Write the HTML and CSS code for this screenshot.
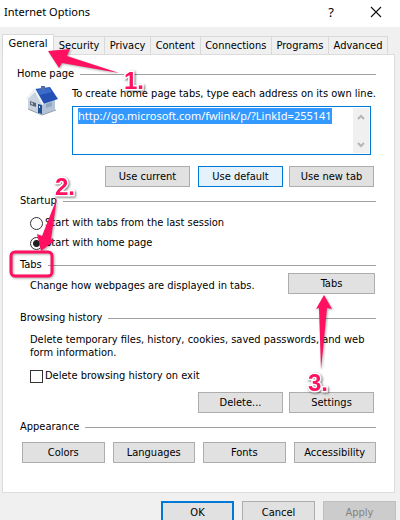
FILE: index.html
```html
<!DOCTYPE html>
<html lang="en">
<head>
<meta charset="utf-8">
<title>Internet Options</title>
<link rel="stylesheet" href="styles.css">
</head>
<body>
<div class="dialog">
  <header class="titlebar">
    <h1>Internet Options</h1>
    <button class="caption" type="button">?</button>
    <button class="caption" type="button" aria-label="Close">
      <svg width="12" height="12" viewBox="0 0 12 12"><path d="M1 1l10 10M11 1L1 11" stroke="#111" stroke-width="1.1" fill="none"/></svg>
    </button>
  </header>
  <nav class="tabs">
    <button type="button" class="tab active">General</button>
    <button type="button" class="tab">Security</button>
    <button type="button" class="tab">Privacy</button>
    <button type="button" class="tab">Content</button>
    <button type="button" class="tab">Connections</button>
    <button type="button" class="tab">Programs</button>
    <button type="button" class="tab">Advanced</button>
  </nav>
  <main class="panel">
    <section class="group home">
      <h2>Home page</h2>
      <div class="home-row">
        <svg class="house" width="34" height="30" viewBox="0 0 34 30">
          <path d="M2 12L10 4l7 13v12L2 23z" fill="#c9d4e0"/>
          <path d="M16 16l13-4v12l-13 5z" fill="#b3c4d8"/>
          <path d="M9 3L24 1l8 12-15 5z" fill="#2450b4"/>
          <path d="M11 4l12-2 3 4-12 3z" fill="#3b6bcb"/>
          <path d="M0 12L9 2l9 16-2 1L9 6 1 14z" fill="#eef3f8"/>
          <path d="M15 0h4v4l-4 1z" fill="#4d6fae"/>
          <path d="M4 15l6 2v4l-6-2z" fill="#596579"/>
          <path d="M5 16l2 1v2l-2-1z" fill="#b9bfc6"/>
          <path d="M12 18l4 1v9l-4-1z" fill="#234f8d"/>
          <path d="M13 20h1v2h-1z" fill="#c0e0fa"/>
          <path d="M20 18l6-2v4l-6 2z" fill="#8fa5c0"/>
          <path d="M2 23l14 6 14-5" fill="none" stroke="#929ca8"/>
        </svg>
        <div class="home-body">
          <label for="urls">To create home page tabs, type each address on its own line.</label>
          <div class="url-box">
            <textarea id="urls" spellcheck="false">http://go.microsoft.com/fwlink/p/?LinkId=255141</textarea>
            <div class="scroll" aria-hidden="true">
              <svg width="8" height="6" viewBox="0 0 8 6"><path d="M1 5l3-3 3 3" fill="none" stroke="#b5b5b5" stroke-width="2"/></svg>
              <svg width="8" height="6" viewBox="0 0 8 6"><path d="M1 1l3 3 3-3" fill="none" stroke="#b5b5b5" stroke-width="2"/></svg>
            </div>
          </div>
        </div>
      </div>
      <div class="actions trio">
        <button type="button" class="btn">Use current</button>
        <button type="button" class="btn hot">Use default</button>
        <button type="button" class="btn">Use new tab</button>
      </div>
    </section>
    <section class="group">
      <h2>Startup</h2>
      <div class="choices">
        <label><input type="radio" name="startup">Start with tabs from the last session</label>
        <label><input type="radio" name="startup" checked>Start with home page</label>
      </div>
    </section>
    <section class="group">
      <h2>Tabs</h2>
      <div class="tabs-row">
        <p>Change how webpages are displayed in tabs.</p>
        <button type="button" class="btn">Tabs</button>
      </div>
    </section>
    <section class="group history">
      <h2>Browsing history</h2>
      <p class="note">Delete temporary files, history, cookies, saved passwords, and web form information.</p>
      <label class="check"><input type="checkbox">Delete browsing history on exit</label>
      <div class="actions">
        <button type="button" class="btn">Delete...</button>
        <button type="button" class="btn">Settings</button>
      </div>
    </section>
    <section class="group">
      <h2>Appearance</h2>
      <div class="appearance">
        <button type="button" class="btn">Colors</button>
        <button type="button" class="btn">Languages</button>
        <button type="button" class="btn">Fonts</button>
        <button type="button" class="btn">Accessibility</button>
      </div>
    </section>
  </main>
  <footer class="footer">
    <button type="button" class="btn ok">OK</button>
    <button type="button" class="btn">Cancel</button>
    <button type="button" class="btn" disabled>Apply</button>
  </footer>
  <svg class="marks" width="400" height="520" viewBox="0 0 400 520" aria-hidden="true">
    <path d="M48 51l22-2-3 7 52 17-57-10-3 5z"/>
    <path d="M57 198l-6 41 3 2-13 10-4-17 5 2z"/>
    <path d="M324 295l8 14-5-1-6 62-2-62-3 1z"/>
    <rect x="11" y="252" width="41" height="24" rx="4"/>
  </svg>
  <span class="num one">1.</span>
  <span class="num two">2.</span>
  <span class="num three">3.</span>
</div>
<script src="script.js"></script>
</body>
</html>
```
FILE: styles.css
```css
* { box-sizing: border-box; }
body {
  margin: 0;
  overflow: hidden;
  background: #f0f0f0;
  color: #000;
  font: 11px/16px "DejaVu Sans Condensed", sans-serif;
}
h1, h2, p { margin: 0; font-weight: 400; font-size: inherit; }
button, textarea, input { font: inherit; color: inherit; margin: 0; }
.dialog { position: relative; }

.titlebar {
  display: flex;
  align-items: center;
  height: 27px;
  padding: 0 12px 4px 4px;
  background: #fff;
}
.titlebar h1 { flex: 1; font: 11px/16px "Noto Sans", sans-serif; }
.caption {
  display: flex;
  justify-content: center;
  width: 24px;
  padding: 0;
  border: 0;
  background: none;
  font: 13px/16px "Noto Sans", sans-serif;
}
.caption:last-child { margin-left: 21px; }
.caption:nth-child(2) { margin-right: 0; }

.tabs {
  display: flex;
  align-items: flex-end;
  height: 27px;
  margin: 0 12px 0 2px;
}
.tab {
  flex: 1 1 auto;
  height: 18px;
  padding: 0;
  border: 1px solid #d9d9d9;
  border-width: 1px 1px 0 0;
  background: #f0f0f0;
  line-height: 16px;
}
.tab.active {
  height: 21px;
  margin-bottom: -1px;
  padding: 0 1px 2px;
  border-left-width: 1px;
  background: #fff;
}

.panel {
  margin: 0 5px 0 2px;
  padding: 11px 18px 29px 17px;
  border: 1px solid #dcdcdc;
  background: #fff;
}
.group { margin: 6px 0 0 0; }
.group.home { margin-top: 0; }
.group.home h2 { margin-left: -3px; }
.group.history { margin-top: 16px; }
.group h2 { display: flex; align-items: center; gap: 6px; }
.group h2::after { content: ""; flex: 1; height: 1px; background: #a0a0a0; }

.home-row { display: flex; margin: 4px 5px 0 6px; }
.house { flex: none; margin-right: 12px; }
.home-body { flex: 1; min-width: 0; }
.home-body label { display: block; white-space: nowrap; }
.url-box {
  display: flex;
  height: 49px;
  margin-top: 4px;
  padding: 1px;
  border: 1px solid #0078d7;
}
textarea {
  flex: 1;
  min-width: 0;
  padding: 0 4px;
  border: 0;
  outline: 0;
  resize: none;
  overflow: hidden;
  background: #fff;
  font: 11px/16px "Noto Sans", sans-serif;
  white-space: nowrap;
}
::selection { background: #3399ff; color: #fff; }
.scroll {
  display: flex;
  flex-direction: column;
  justify-content: space-between;
  align-items: center;
  width: 16px;
  padding: 6px 0 5px;
  background: #f0f0f0;
}

.btn {
  width: 85px;
  height: 21px;
  padding: 0;
  border: 1px solid #adadad;
  background: #e1e1e1;
  line-height: 16px;
}
.btn.hot { border-color: #0078d7; background: #e5f1fb; }
.actions { display: flex; justify-content: flex-end; gap: 6px; margin: 8px 2px 0 0; }
.trio { margin-top: 11px; }
.trio .hot { margin-left: 2px; }

.choices { display: flex; flex-direction: column; gap: 4px; margin: 6px 0 0 10px; }
label:has(input) { display: flex; align-items: center; gap: 2px; }
input[type="radio"], input[type="checkbox"] {
  appearance: none;
  width: 13px;
  height: 13px;
  border: 1px solid #333;
  background: #fff;
}
input[type="radio"] { border-radius: 50%; }
input[type="radio"]:checked { background: radial-gradient(circle, #222 3px, #fff 4px); }

.tabs-row { display: flex; justify-content: space-between; align-items: flex-end; margin: 0 1px 0 10px; }
.tabs-row .btn { width: 87px; }
.note { margin: 7px 0 0 10px; line-height: 13px; }
.check { margin: 9px 0 0 10px; }
.appearance { display: flex; justify-content: space-between; gap: 8px; margin: 7px 0 0 2px; }

.footer { display: flex; justify-content: flex-end; gap: 8px; margin: 8px 4px 0 0; }
.footer .btn { width: 73px; height: 23px; }
.footer .ok { border: 2px solid #0078d7; }
.btn:disabled { border-color: #bfbfbf; background: #ccc; color: #838383; }

.marks { position: absolute; left: 0; top: 0; pointer-events: none; filter: drop-shadow(1px 1px 1px #0005); }
.marks path { fill: #ff1060; }
.marks rect { fill: none; stroke: #ff1060; stroke-width: 3; }
.num {
  position: absolute;
  color: #ff1060;
  font: bold 24px/24px "Liberation Sans", sans-serif;
  paint-order: stroke fill;
  -webkit-text-stroke: 3px #fff;
  filter: drop-shadow(1px 1px 1px #0008);
}
.one { left: 124px; top: 69px; }
.two { left: 55px; top: 175px; }
.three { left: 308px; top: 371px; }
```
FILE: script.js
```js
const urls = document.getElementById("urls");
urls.focus();
urls.select();
```
